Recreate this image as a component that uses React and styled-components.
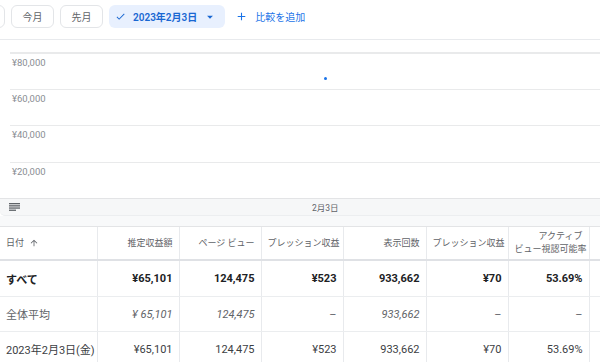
import React from 'react';
import styled, { createGlobalStyle } from 'styled-components';

const GlobalStyle = createGlobalStyle`
  body {
    margin: 0;
    background: #fff;
    font-family: Roboto, "Noto Sans CJK JP", sans-serif;
    overflow: hidden;
  }
`;

const Page = styled.div`
  width: 600px;
  height: 362px;
  overflow: hidden;
  background: #fff;
`;

const TopBar = styled.div`
  display: flex;
  align-items: flex-start;
  gap: 6px;
  height: 34px;
  padding-top: 5px;
  border-bottom: 1px solid #e8eaed;
  white-space: nowrap;
`;

const PresetButton = styled.button`
  flex: none;
  width: 43px;
  height: 23px;
  padding: 0;
  margin-left: ${(p) => p.$offset || 0}px;
  border: 1px solid #e3e5e8;
  border-radius: 6px;
  background: #fff;
  color: #5f6368;
  font-family: inherit;
  font-size: 10px;
`;

const DateChip = styled.div`
  flex: none;
  display: flex;
  align-items: center;
  height: 23px;
  padding: 0 8px 0 6px;
  border-radius: 6px;
  background: #e8f0fe;
  color: #1967d2;
  font-size: 10px;
  font-weight: 600;
  svg {
    flex: none;
    fill: #1967d2;
  }
`;

const ChipText = styled.span`
  margin: 0 6px 0 7px;
`;

const AddCompare = styled.div`
  flex: none;
  display: flex;
  align-items: center;
  height: 23px;
  margin-left: 4px;
  color: #1a73e8;
  font-size: 10px;
  svg {
    fill: #1a73e8;
    margin-right: 7px;
  }
`;

const ChartArea = styled.div`
  padding: 12px 0 0 10px;
`;

const Plot = styled.div`
  position: relative;
  margin-right: -40px;
`;

const Band = styled.div`
  height: ${(p) => p.$h}px;
  border-top: ${(p) => (p.$first ? 2 : 1)}px solid #e9eaeb;
  box-sizing: border-box;
  padding: 3px 0 0 2px;
  color: #8a8e93;
  font-size: 9.5px;
`;

const Point = styled.span`
  position: absolute;
  left: 314px;
  top: 25px;
  width: 3px;
  height: 3px;
  border-radius: 50%;
  background: #1a73e8;
`;

const Legend = styled.div`
  display: flex;
  align-items: center;
  height: 16px;
  border-top: 1px solid #e3e4e6;
  border-bottom: 1px solid #eceef0;
  border-bottom-left-radius: 5px;
  background: #f6f7f8;
  color: #5f6368;
  font-size: 8.5px;
  padding-left: 9px;
`;

const LegendLabel = styled.span`
  margin-left: 292px;
`;

const Spacer = styled.div`
  height: 10px;
  background: #f8f9fa;
  border-bottom: 1px solid #e3e4e6;
`;

const Table = styled.table`
  border-collapse: collapse;
  table-layout: fixed;
  width: 680px;
`;

const HeadCell = styled.th`
  height: 32px;
  padding: 0 6px;
  border-right: 1px solid #e8eaed;
  border-bottom: 2px solid #dfe1e5;
  color: #5f6368;
  font-size: 9px;
  font-weight: 400;
  line-height: 13px;
  text-align: ${(p) => (p.$left ? 'left' : 'right')};
  white-space: nowrap;
  svg {
    fill: #5f6368;
    vertical-align: -2px;
    margin-left: 5px;
  }
`;

const Cell = styled.td`
  height: ${(p) => p.$h || 34}px;
  padding: 0 6px;
  border-right: 1px solid #e8eaed;
  border-bottom: 1px solid #ebedef;
  font-size: 11px;
  white-space: nowrap;
  text-align: ${(p) => (p.$left ? 'left' : 'right')};
  color: ${(p) => (p.$variant === 'total' ? '#202124' : p.$variant === 'avg' ? '#5f6368' : '#3c4043')};
  font-weight: ${(p) => (p.$variant === 'total' ? 700 : 400)};
  font-style: ${(p) => (p.$italic ? 'italic' : 'normal')};
`;

const Icon = ({ d, size = 12 }) => (
  <svg width={size} height={size} viewBox="0 0 24 24">
    <path d={d} />
  </svg>
);

const LinesIcon = () => (
  <svg width="11" height="8" viewBox="0 0 11 8" fill="#5f6368">
    <rect x="0" y="0" width="11" height="1.3" />
    <rect x="0" y="2.2" width="11" height="1.3" />
    <rect x="0" y="4.4" width="11" height="1.3" />
    <rect x="0" y="6.6" width="7" height="1.3" />
  </svg>
);

const CHECK = 'M9 16.17L4.83 12l-1.42 1.41L9 19 21 7l-1.41-1.41z';
const DROP = 'M7 10l5 5 5-5z';
const PLUS = 'M19 13h-6v6h-2v-6H5v-2h6V5h2v6h6v2z';
const UP = 'M4 12l1.41 1.41L11 7.83V20h2V7.83l5.58 5.59L20 12l-8-8-8 8z';

const widths = [97, 82, 82, 82, 83, 82, 81, 91];

const rows = [
  { variant: 'total', h: 35, cells: ['すべて', '¥65,101', '124,475', '¥523', '933,662', '¥70', '53.69%'] },
  { variant: 'avg', h: 34, italic: [1, 2, 4], cells: ['全体平均', '¥ 65,101', '124,475', '–', '933,662', '–', '–'] },
  { variant: 'day', h: 34, cells: ['2023年2月3日(金)', '¥65,101', '124,475', '¥523', '933,662', '¥70', '53.69%'] },
];

export default function App() {
  return (
    <Page>
      <GlobalStyle />
      <TopBar>
        <PresetButton $offset={-38}>昨日</PresetButton>
        <PresetButton>今月</PresetButton>
        <PresetButton>先月</PresetButton>
        <DateChip>
          <Icon d={CHECK} size={11} />
          <ChipText>2023年2月3日</ChipText>
          <Icon d={DROP} size={14} />
        </DateChip>
        <AddCompare>
          <Icon d={PLUS} size={13} />
          比較を追加
        </AddCompare>
      </TopBar>

      <ChartArea>
        <Plot>
          <Band $first $h={37}>¥80,000</Band>
          <Band $h={36}>¥60,000</Band>
          <Band $h={37}>¥40,000</Band>
          <Band $h={36}>¥20,000</Band>
          <Point />
        </Plot>
      </ChartArea>
      <Legend>
        <LinesIcon />
        <LegendLabel>2月3日</LegendLabel>
      </Legend>
      <Spacer />

      <Table>
        <colgroup>
          {widths.map((w, i) => (
            <col key={i} style={{ width: w }} />
          ))}
        </colgroup>
        <thead>
          <tr>
            <HeadCell $left>
              日付
              <Icon d={UP} size={10} />
            </HeadCell>
            <HeadCell>推定収益額</HeadCell>
            <HeadCell>ページ ビュー</HeadCell>
            <HeadCell>プレッション収益</HeadCell>
            <HeadCell>表示回数</HeadCell>
            <HeadCell>プレッション収益</HeadCell>
            <HeadCell>
              アクティブ
              <br />
              ビュー視認可能率
            </HeadCell>
            <HeadCell />
          </tr>
        </thead>
        <tbody>
          {rows.map((r) => (
            <tr key={r.variant}>
              {r.cells.map((c, i) => (
                <Cell
                  key={i}
                  $h={r.h}
                  $left={i === 0}
                  $variant={r.variant}
                  $italic={r.italic && r.italic.includes(i)}
                >
                  {c}
                </Cell>
              ))}
              <Cell $h={r.h} />
            </tr>
          ))}
        </tbody>
      </Table>
    </Page>
  );
}
